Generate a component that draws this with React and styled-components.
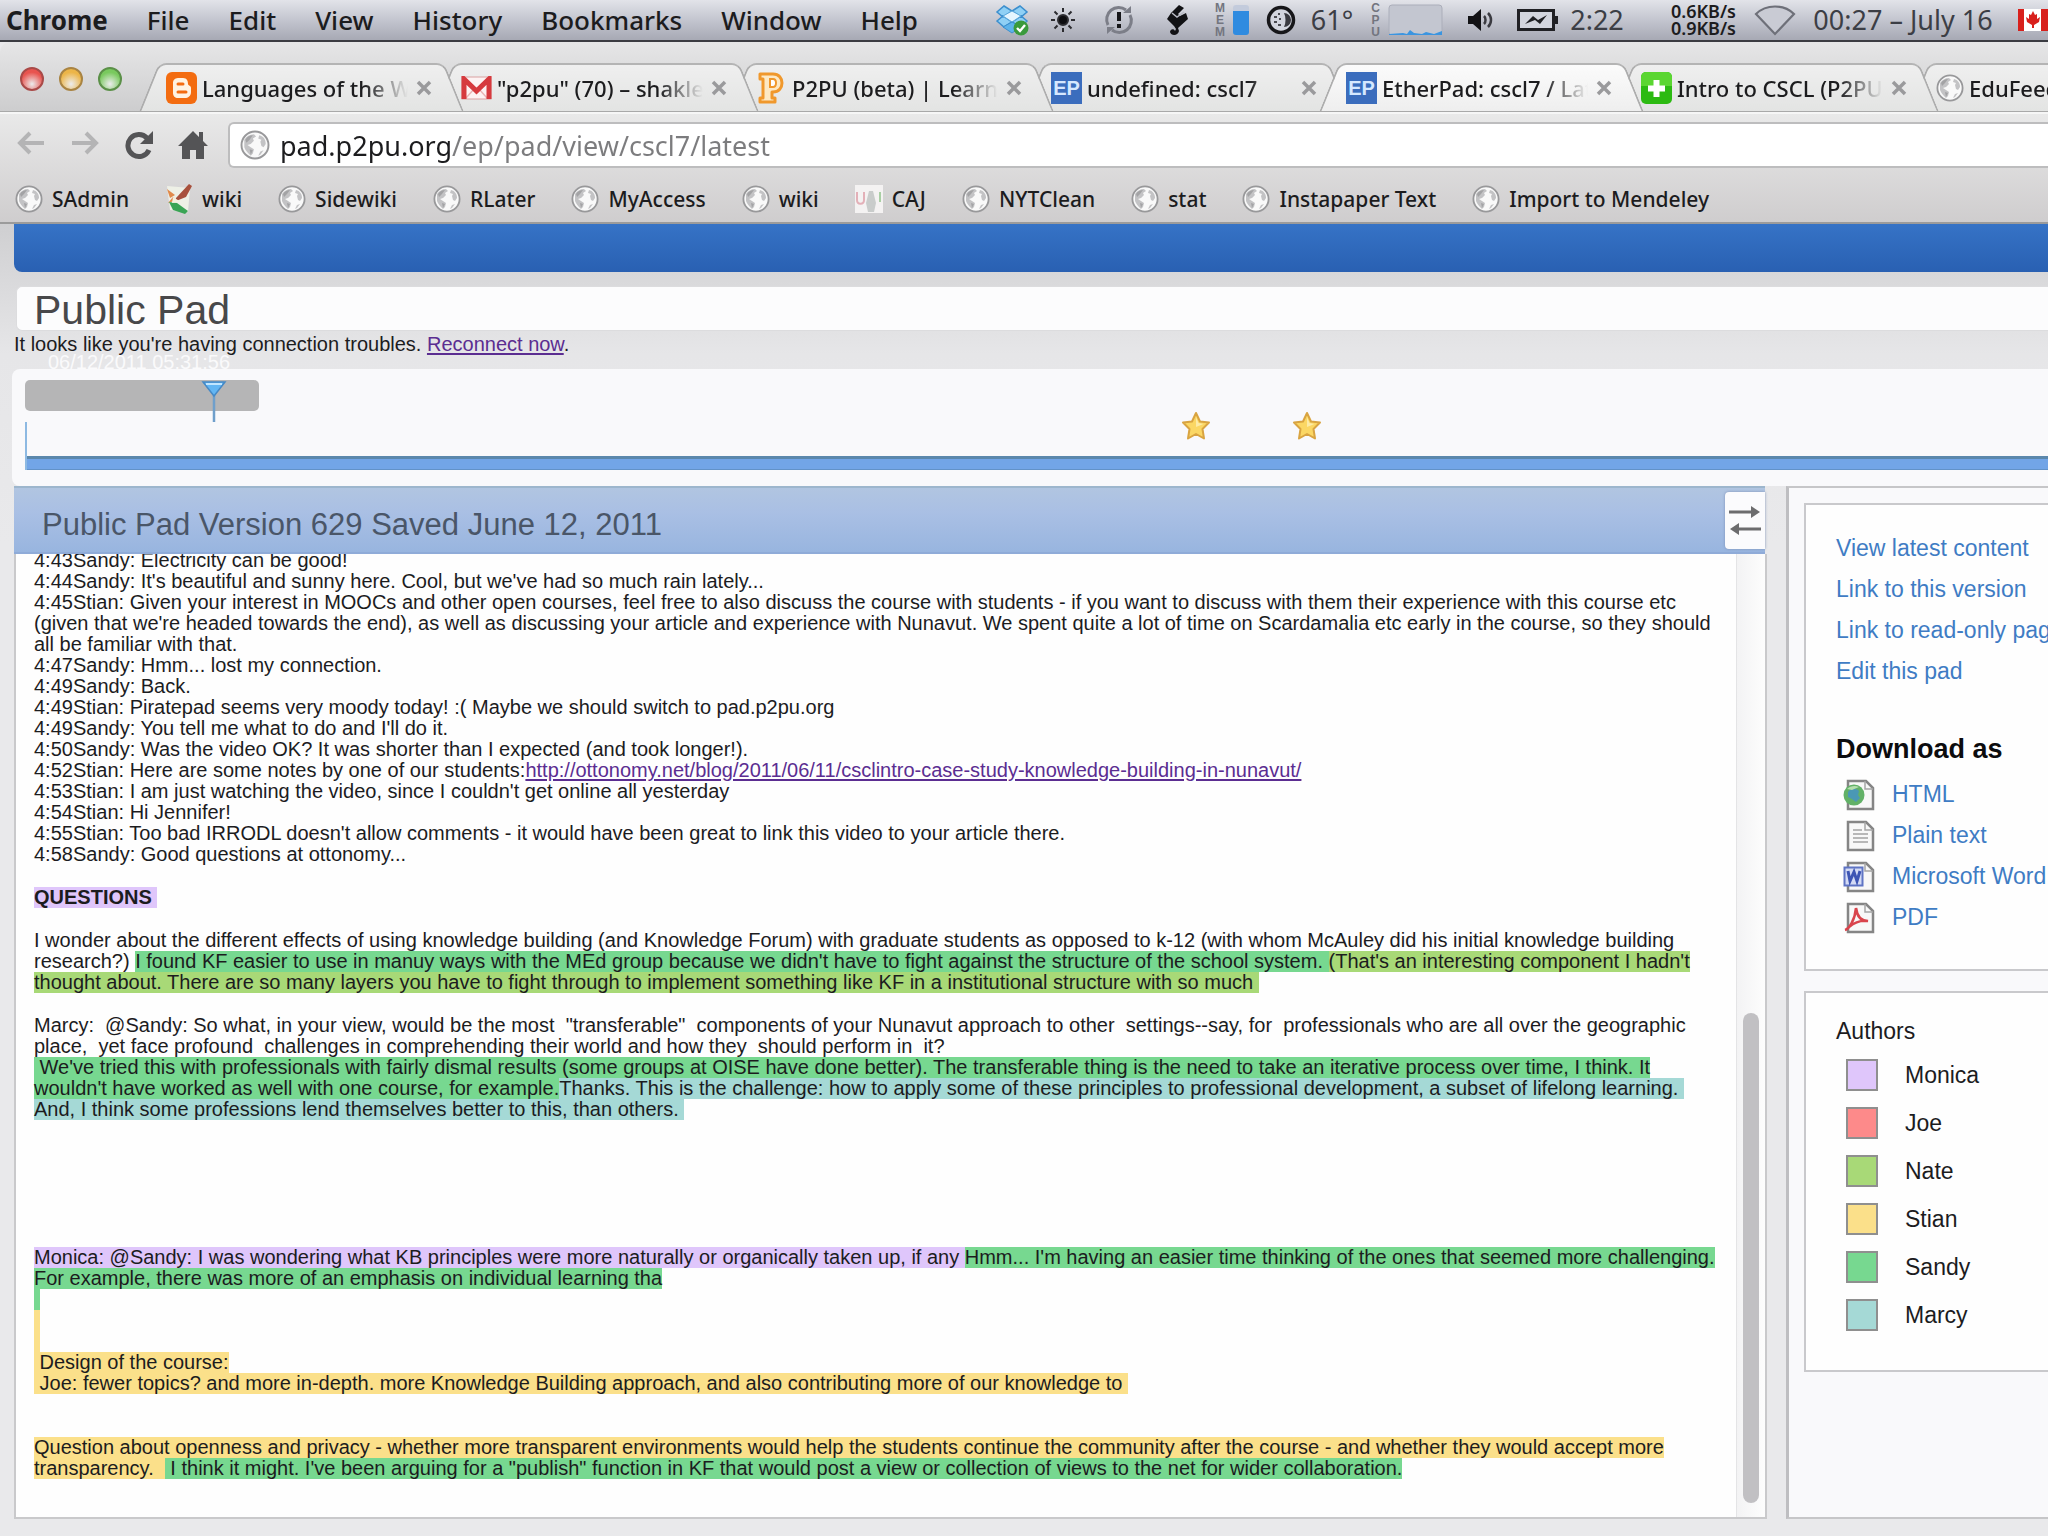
import React from "react";
import styled, { createGlobalStyle, css } from "styled-components";

const colors = {
  ink: "#1c1c1e",
  link: "#3f7cc4",
  visited: "#5b2d91",
  monica: "#dfc6fb",
  joe: "#fd8a8a",
  nate: "#a8d977",
  stian: "#fbe08a",
  sandy: "#77d890",
  marcy: "#a5d9d6",
};

const GlobalStyle = createGlobalStyle`
  *, *::before, *::after { box-sizing: border-box; }
  html, body { margin: 0; padding: 0; }
  body {
    background: #e9e9eb;
    color: ${colors.ink};
    font-family: "Liberation Sans", Arial, sans-serif;
    overflow-x: hidden;
  }
  p, h1, h2, h3, ul { margin: 0; padding: 0; }
  ul { list-style: none; }
  svg { display: block; flex: none; }
`;

const systemFont = css`
  font-family: "Noto Sans", "Open Sans", sans-serif;
`;

const plainButton = css`
  border: 0;
  padding: 0;
  background: none;
  color: inherit;
  font: inherit;
  cursor: pointer;
`;

const Screen = styled.div`
  display: flex;
  flex-direction: column;
  min-height: 100vh;
`;

/* ---------- system menu bar ---------- */

const MenuBar = styled.header`
  ${systemFont}
  display: flex;
  align-items: center;
  height: 42px;
  padding-left: 6px;
  overflow: hidden;
  border-bottom: 2px solid #3b3c42;
  background: linear-gradient(#e2e3e9, #c3c5cf 50%, #a7a9b4);
  font-size: 26px;
  line-height: 40px;
`;

const MenuNav = styled.nav`
  display: flex;
  gap: 39px;
  margin-right: auto;
`;

const MenuItem = styled.button`
  ${plainButton}
  ${systemFont}
  font-weight: ${(p) => (p.$bold ? 700 : 500)};
`;

const StatusArea = styled.div`
  display: flex;
  flex: none;
  align-items: center;
  height: 40px;
  color: #3c3e45;
  font-size: 27px;
`;

const StatusItem = styled.div`
  display: flex;
  align-items: center;
  justify-content: ${(p) => p.$align || "center"};
  gap: 8px;
  width: ${(p) => p.$w}px;
  white-space: nowrap;
`;

const StackedLabel = styled.span`
  display: flex;
  flex-direction: column;
  align-items: center;
  color: #73757f;
  font-family: "Liberation Sans", Arial, sans-serif;
  font-size: 12px;
  font-weight: 700;
  line-height: 12px;
`;

const MemoryGauge = styled.span`
  width: 16px;
  height: 30px;
  border-radius: 3px;
  background: linear-gradient(#c3cbdc 20%, #2f8be0 20%);
`;

const NetworkRate = styled.span`
  padding-right: 12px;
  color: ${colors.ink};
  font-size: 18px;
  font-weight: 600;
  line-height: 17px;
`;

/* ---------- browser chrome ---------- */

const TabStrip = styled.div`
  ${systemFont}
  display: flex;
  align-items: flex-end;
  height: 70px;
  overflow: hidden;
  border-top-left-radius: 10px;
  border-bottom: 1px solid #a9a9a9;
  background: linear-gradient(#e6e6e7, #cdcdce);
`;

const WindowButtons = styled.div`
  display: flex;
  flex: none;
  gap: 15px;
  width: 138px;
  padding: 0 0 20px 20px;
`;

const WindowButton = styled.button`
  ${plainButton}
  width: 24px;
  height: 24px;
  border: 2px solid ${(p) => p.$edge};
  border-radius: 50%;
  background: radial-gradient(circle at 50% 75%, #fff8, ${(p) => p.$fill} 65%);
`;

const TabRow = styled.div`
  display: flex;
  flex: none;
`;

const Tab = styled.div`
  position: relative;
  z-index: ${(p) => p.$level};
  display: flex;
  flex: none;
  align-items: center;
  width: 327px;
  height: 48px;
  margin-right: -32px;
  padding: 1px 33px 0 28px;

  &::before,
  &::after {
    content: "";
    position: absolute;
    z-index: -1;
    top: 0;
    bottom: ${(p) => (p.$active ? "-1px" : "0")};
    border-top: 2px solid #b4b4b4;
    background: ${(p) =>
      p.$active
        ? "linear-gradient(#fbfbfb, #eeeeee)"
        : "linear-gradient(#efefef, #e3e4e3)"};
  }
  &::before {
    left: 11px;
    right: 50%;
    border-left: 2px solid #adadad;
    border-top-left-radius: 8px;
    transform: skewX(-22deg);
  }
  &::after {
    left: 40%;
    right: 11px;
    border-right: 2px solid #adadad;
    border-top-right-radius: 8px;
    transform: skewX(22deg);
  }
`;

const TabLabel = styled.button`
  ${plainButton}
  ${systemFont}
  flex: 1;
  min-width: 0;
  margin-left: 5px;
  overflow: hidden;
  text-align: left;
  white-space: nowrap;
  font-size: 22px;
  font-weight: 500;
  line-height: 32px;
  mask-image: linear-gradient(to right, #000 calc(100% - 44px), transparent);
`;

const TabClose = styled.button`
  ${plainButton}
  margin-left: 8px;
  color: #9a9a9c;
`;

const LetterBadge = styled.span`
  flex: none;
  width: 31px;
  height: 32px;
  background: #3b6dbd;
  color: #d5e8ff;
  text-align: center;
  font-family: "Liberation Sans", Arial, sans-serif;
  font-size: 20px;
  font-weight: 700;
  line-height: 32px;
`;

const Toolbar = styled.div`
  ${systemFont}
  display: flex;
  flex-direction: column;
  height: 112px;
  padding-top: 8px;
  border-top: 2px solid #f6f6f6;
  border-bottom: 2px solid #9b9b9b;
  background: linear-gradient(#e9e9e9, #cfcdce);
`;

const NavigationRow = styled.div`
  display: flex;
  align-items: center;
`;

const NavButtons = styled.div`
  display: flex;
  flex: none;
  width: 228px;
  padding-left: 4px;
`;

const NavButton = styled.button`
  ${plainButton}
  display: flex;
  justify-content: center;
  width: 54px;
  color: ${(p) => (p.$muted ? "#b4b4b5" : "#545456")};
`;

const AddressBar = styled.label`
  display: flex;
  flex: 1;
  align-items: center;
  gap: 10px;
  height: 46px;
  padding-left: 10px;
  border: 2px solid #bdbdbe;
  border-right: 0;
  border-radius: 6px 0 0 6px;
  background: #fff;
`;

const AddressInput = styled.input`
  ${systemFont}
  flex: 1;
  height: 40px;
  padding: 0;
  border: 0;
  outline: 0;
  background: linear-gradient(to right, #1c1c1e 171px, #7c7c7e 171px);
  background-clip: text;
  color: transparent;
  font-size: 27px;
`;

const BookmarkRow = styled.nav`
  display: flex;
  flex: 1;
  align-items: center;
  gap: 36px;
  padding: 7px 0 0 15px;
`;

const Bookmark = styled.a`
  display: flex;
  align-items: center;
  gap: 9px;
  color: ${colors.ink};
  font-size: 21px;
  font-weight: 500;
  line-height: 30px;
  text-decoration: none;
  white-space: nowrap;
`;

/* ---------- pad page ---------- */

const PadPage = styled.main`
  display: flex;
  flex: 1;
  flex-direction: column;
  padding: 0 0 17px 14px;
  background: linear-gradient(#cfcfd1, #e6e6e8 130px, #e9e9eb 320px);
`;

const Banner = styled.div`
  height: 48px;
  margin-bottom: 14px;
  border-bottom-left-radius: 8px;
  background: linear-gradient(#3673c6, #2960b2);
`;

const PadTitle = styled.h1`
  height: 45px;
  margin-left: 2px;
  padding-left: 17px;
  border: 1px solid #dcdcde;
  border-right: 0;
  border-radius: 6px 0 0 6px;
  background: #fcfcfd;
  color: #48484a;
  font-size: 41px;
  font-weight: 400;
  line-height: 47px;
`;

const ConnectionNote = styled.p`
  height: 38px;
  font-size: 20px;
  line-height: 26px;
`;

const VisitedLink = styled.a`
  color: ${colors.visited};
  text-underline-offset: 2px;
`;

const Timeline = styled.section`
  position: relative;
  height: 117px;
  margin-left: -2px;
  padding: 11px 0 0 13px;
  border-radius: 8px 0 0 8px;
  background: #f9f9fb;
`;

const TimelineClock = styled.span`
  position: absolute;
  top: -18px;
  left: 36px;
  color: #fafafb;
  font-size: 20px;
  line-height: 22px;
`;

const Scrubber = styled.div`
  position: relative;
  width: 234px;
  height: 42px;
`;

const ScrubberRange = styled.input`
  appearance: none;
  display: block;
  width: 100%;
  height: 31px;
  margin: 0;
  border-radius: 5px;
  background: #b5b5b6;

  &::-webkit-slider-thumb {
    appearance: none;
    width: 26px;
    height: 31px;
  }
`;

const ScrubberHandle = styled.svg`
  position: absolute;
  top: 1px;
  left: 176px;
  pointer-events: none;
`;

const Axis = styled.div`
  position: relative;
  display: flex;
  align-items: flex-end;
  height: 48px;
  border-left: 2px solid #8db9e2;
`;

const AxisBar = styled.div`
  flex: 1;
  height: 14px;
  border-top: 3px solid #5b88ac;
  border-bottom: 1px solid #6292c8;
  background: #72a5e7;
`;

const StarPin = styled.svg`
  position: absolute;
  top: -11px;
  left: ${(p) => p.$x}px;
`;

const Columns = styled.div`
  display: flex;
  flex: 1;
  gap: 19px;
`;

const Document = styled.section`
  display: flex;
  flex: 1;
  flex-direction: column;
  min-width: 0;
`;

const VersionBar = styled.header`
  display: flex;
  align-items: center;
  justify-content: space-between;
  height: 68px;
  margin-right: 2px;
  border-top: 2px solid #9db6cd;
  border-bottom: 2px solid #8fabd8;
  background: linear-gradient(#b1c5e1, #a9bfe4 40%, #98b5df);
`;

const VersionTitle = styled.h2`
  padding: 9px 0 0 28px;
  color: #4a5668;
  font-size: 31px;
  font-weight: 400;
  line-height: 40px;
`;

const SwapButton = styled.button`
  ${plainButton}
  display: flex;
  align-items: center;
  justify-content: center;
  width: 40px;
  height: 57px;
  border-radius: 4px 0 0 4px;
  background: #fbfbfd;
  box-shadow: 0 0 3px #7b8fb5;
  color: #6c6c6e;
`;

const Viewport = styled.div`
  display: flex;
  flex: 1;
  overflow: hidden;
  border: 2px solid #c9c9cb;
  border-top: 0;
  background: #fefefe;
`;

const PadText = styled.article`
  flex: 1;
  min-width: 0;
  margin-top: -4px;
  padding: 0 0 16px 18px;
  font-size: 20px;
  line-height: 21px;
  white-space: pre;
`;

const Passage = styled.div`
  margin-bottom: ${(p) => p.$after || 0}px;
`;

const Line = styled.p`
  height: 21px;
`;

const Mark = styled.span`
  display: inline-block;
  height: 21px;
  background: ${(p) => colors[p.$by]};
  font-weight: ${(p) => (p.$bold ? 700 : 400)};
  vertical-align: top;
`;

const ScrollTrack = styled.div`
  display: flex;
  align-items: flex-end;
  flex: none;
  width: 29px;
  padding: 0 0 14px 6px;
  border-left: 1px solid #e4e4e6;
  background: linear-gradient(to right, #f3f3f4, #fdfdfd);
`;

const ScrollThumb = styled.div`
  width: 16px;
  height: 490px;
  border-radius: 8px;
  background: #c1c0c3;
`;

const Sidebar = styled.aside`
  flex: none;
  width: 262px;
  padding: 15px 0 0 15px;
  overflow: hidden;
  border: 2px solid #c6c6c8;
  border-right: 0;
  border-left: 3px solid #bebec1;
  background: #f9f9fb;
`;

const Card = styled.section`
  margin-bottom: 20px;
  padding: ${(p) => p.$pad};
  border: 2px solid #c9c9cc;
  border-right: 0;
  background: #fefefe;
  font-size: 23px;
  white-space: nowrap;
`;

const CardLink = styled.a`
  display: block;
  color: ${colors.link};
  line-height: 41px;
  text-decoration: none;
`;

const DownloadHeading = styled.h3`
  margin: 35px 0 3px;
  color: #0c0c0e;
  font-size: 27px;
  line-height: 44px;
`;

const DownloadRow = styled.li`
  display: flex;
  align-items: center;
  gap: 17px;
  height: 41px;
  padding-left: 7px;
`;

const AuthorsHeading = styled.h3`
  margin-bottom: 2px;
  font-size: 23px;
  font-weight: 400;
  line-height: 36px;
`;

const AuthorRow = styled.li`
  display: flex;
  align-items: center;
  gap: 27px;
  height: 48px;
  padding-left: 10px;
`;

const Swatch = styled.span`
  width: 32px;
  height: 32px;
  border: 2px solid #8f8f8f;
  background: ${(p) => colors[p.$by]};
`;

/* ---------- drawings ---------- */

const Globe = ({ size = 28 }) => (
  <svg width={size} height={size} viewBox="0 0 28 28">
    <circle cx="14" cy="14" r="12.6" fill="#f9f9f9" stroke="#98989a" strokeWidth="1.8" />
    <path d="M4 9c2-3 5-5 9-5l2 2-3 2 1 2-3 3-3 1 3 2 3 2-1 4-2 2c-3-3-5-5-6-8z" fill="#c3c3c5" />
    <path d="M5 9c2-3 4-4 7-4l-3 4-3 3zM9 18l3 1-2 4z" fill="#a3a3a5" />
    <path d="M18 5c4 1 6 4 6 8l-2 3-2-1-1-4 1-2-3-1zM19 20l3-1-3 4-2 1z" fill="#c3c3c5" />
  </svg>
);

const DropboxIcon = () => (
  <svg width="34" height="32" viewBox="0 0 34 32">
    <path d="M9 2l8 5-9 6-6-5zM25 2l-8 5 9 6 6-5zM2 17l6-5 9 6-8 5zM32 17l-6-5-9 6 8 5z" fill="#8fd0f5" stroke="#3c8fce" strokeWidth="1.5" />
    <path d="M8 12l9-5 9 5-9 6z" fill="#e4f5ff" stroke="#5aa8dc" />
    <path d="M8 23l9-5 9 5-9 6z" fill="#5db3ea" stroke="#3c8fce" />
    <circle cx="26" cy="24" r="7.5" fill="#3a9a3c" />
    <path d="M22 24l3 3 5-6" fill="none" stroke="#fff" strokeWidth="2.4" />
  </svg>
);

const SunIcon = () => (
  <svg width="26" height="26" viewBox="0 0 26 26" stroke="#2c2c30" strokeWidth="2" fill="#0d0d10">
    <circle cx="13" cy="13" r="5" />
    <path d="M13 1v4M13 21v4M1 13h4M21 13h4M4.500 4.500l3 3M18.500 18.500l3 3M4.500 21.500l3-3M18.500 7.500l3-3" />
  </svg>
);

const SyncAlertIcon = () => (
  <svg width="30" height="30" viewBox="0 0 30 30" fill="none">
    <path d="M4 20A12 12 0 0 1 22 5M26 10A12 12 0 0 1 8 25" stroke="#7c7e88" strokeWidth="3" />
    <path d="M19 8h8V1zM11 22H3v7z" fill="#7c7e88" />
    <path d="M15 7v9M15 19v4" stroke="#17171a" strokeWidth="4" />
  </svg>
);

const QuillIcon = () => (
  <svg width="24" height="32" viewBox="0 0 24 32">
    <path d="M14 1l5 3-6 6 2 2 6-3 2 6-10 9 1 3c-1 5-8 5-9 1 0-3 4-4 5-1l1-2-2-3-7-7 4-6z" fill="#121215" />
    <path d="M7 9l5 4 7-5" fill="none" stroke="#b9bbc5" strokeWidth="1.500" />
  </svg>
);

const DialIcon = () => (
  <svg width="30" height="30" viewBox="0 0 30 30">
    <circle cx="15" cy="15" r="12.500" fill="#d3d5de" stroke="#17171a" strokeWidth="3.500" />
    <path d="M18 8a7 7 0 0 1 0 14c2-4 2-10 0-14z" fill="#3a3a40" />
    <path d="M8 12h3M8 17h3M12 9h2M12 20h3M13 14h2" stroke="#4a4a50" strokeWidth="2" />
  </svg>
);

const CpuGraph = () => (
  <svg width="55" height="32" viewBox="0 0 55 32">
    <rect x="1" y="1" width="53" height="30" rx="3" fill="#c3c6d0" stroke="#abaeba" />
    <path d="M1 31v-1l14-1 4 1 3-4 4 3 8 1 4-2 8 2 8-3v4z" fill="#3b95e0" />
  </svg>
);

const SpeakerIcon = () => (
  <svg width="30" height="26" viewBox="0 0 30 26">
    <path d="M2 9h5l8-7v22l-8-7H2z" fill="#121215" />
    <path d="M18 9c2 2 2 6 0 8M22 6c4 4 4 10 0 14" fill="none" stroke="#3a3a40" strokeWidth="2.500" />
  </svg>
);

const BatteryIcon = () => (
  <svg width="42" height="24" viewBox="0 0 42 24">
    <rect x="1.500" y="2.500" width="35" height="19" fill="#d3d5de" stroke="#202024" strokeWidth="3" />
    <path d="M38 8h3v8h-3z" fill="#202024" />
    <path d="M8 16l8-8 5 4 9-5-7 9-5-4z" fill="#202024" />
  </svg>
);

const WifiIcon = () => (
  <svg width="42" height="32" viewBox="0 0 42 32">
    <path d="M2 10C12 0 30 0 40 10L21 30z" fill="#c9cbd4" stroke="#6e7079" strokeWidth="2.200" />
  </svg>
);

const CanadaFlag = () => (
  <svg width="30" height="22" viewBox="0 0 30 22">
    <path d="M0 0h30v22H0z" fill="#fff" />
    <path d="M0 0h6v22H0zM23 0h7v22h-7z" fill="#d8201c" />
    <path d="M15 2l2 4 2-1v5l3-2-1 5-5 3v3h-2v-3l-5-3-1-5 3 2V5l2 1z" fill="#d8201c" />
  </svg>
);

const BloggerIcon = () => (
  <svg width="31" height="32" viewBox="0 0 31 32">
    <rect width="31" height="32" rx="6" fill="#f36c10" />
    <path d="M7 11c0-4 3-5 6-5h4c4 0 5 3 5 6 0 2 3 1 3 4v4c0 4-3 6-6 6h-7c-3 0-5-2-5-5z" fill="#fff3e2" />
    <path d="M12 12h5M12 20h8" stroke="#f36c10" strokeWidth="3" strokeLinecap="round" />
  </svg>
);

const GmailIcon = () => (
  <svg width="31" height="24" viewBox="0 0 31 24">
    <rect x="1" y="1" width="29" height="22" fill="#fdf3f3" stroke="#d9a1a1" />
    <path d="M5 22l8-9M26 22l-8-9" stroke="#eab6b6" strokeWidth="1.500" />
    <path d="M3 23V3l12.500 12L28 3v20" fill="none" stroke="#d63a3e" strokeWidth="5" />
  </svg>
);

const P2puIcon = () => (
  <svg width="31" height="32" viewBox="0 0 31 32">
    <path d="M4 2h13c12 0 12 18 0 18h-1v6h3v4H4v-4h3V7H4z" fill="#fde9c4" stroke="#f0982c" strokeWidth="3" strokeLinejoin="round" />
    <path d="M14 7h3c4 0 4 8 0 8h-3z" fill="#fff" stroke="#f0982c" strokeWidth="2" />
  </svg>
);

const PlusIcon = () => (
  <svg width="31" height="32" viewBox="0 0 31 32">
    <rect width="31" height="32" rx="5" fill="#2cba12" />
    <path d="M5 0h21a5 5 0 0 1 5 5v9H0V5a5 5 0 0 1 5-5z" fill="#5ad631" />
    <path d="M15.500 8v17M7 16.500h17" stroke="#fff" strokeWidth="6" />
  </svg>
);

const CloseGlyph = () => (
  <svg width="16" height="16" viewBox="0 0 16 16">
    <path d="M2 2l12 12M14 2L2 14" stroke="currentColor" strokeWidth="3.500" />
  </svg>
);

const ArrowGlyph = ({ flip }) => (
  <svg width="30" height="26" viewBox="0 0 30 26">
    <path
      d={flip ? "M2 13h24M16 3l10 10-10 10" : "M28 13H4M14 3L4 13l10 10"}
      fill="none"
      stroke="currentColor"
      strokeWidth="4"
    />
  </svg>
);

const ReloadGlyph = () => (
  <svg width="30" height="30" viewBox="0 0 30 30">
    <path d="M23 8a11 11 0 1 0 2 12" fill="none" stroke="currentColor" strokeWidth="5" />
    <path d="M29 1v13H16z" fill="currentColor" />
  </svg>
);

const HomeGlyph = () => (
  <svg width="30" height="30" viewBox="0 0 30 30">
    <path d="M15 1l6 6V2h4v9l5 5h-4v13h-8v-9h-6v9H4V16H0z" fill="currentColor" />
  </svg>
);

const WikiIcon = () => (
  <svg width="28" height="32" viewBox="0 0 28 32">
    <path d="M2 3l23 2-2 24-18-2z" fill="#eef0e6" />
    <path d="M2 6l8 6-5 3zM3 20l5-6 4 3z" fill="#e08a4c" />
    <path d="M11 15L24 1l3 2-6 11-10 4z" fill="#a8503c" />
    <path d="M4 19l8 1 11 8-3 3-12-4z" fill="#3aa455" />
    <path d="M8 14l8 5-9 1z" fill="#f6f0df" />
  </svg>
);

const CajIcon = () => (
  <svg width="28" height="28" viewBox="0 0 28 28">
    <path d="M0 0h28v28H0z" fill="#f4f2f2" />
    <path d="M2 7v8c0 5 7 5 7 0V7" fill="none" stroke="#e3b0b8" strokeWidth="2" />
    <path d="M11 18l3-12h4l3 12-2 9h-6z" fill="#c9cccb" />
    <path d="M25 7v10" stroke="#a9cfa4" strokeWidth="2" />
  </svg>
);

const Star = ({ x }) => (
  <StarPin $x={x} width="30" height="30" viewBox="0 0 30 30">
    <path
      d="M15 2l4 8.500 9 1-6.500 6.500 1.500 9.500-8-4.500-8 4.500 1.500-9.500L2 11.500l9-1z"
      fill="#fbd764"
      stroke="#d9a441"
      strokeWidth="2"
      strokeLinejoin="round"
    />
    <path d="M15 6l2.500 6 5 1-7.500 3z" fill="#fdeba6" />
  </StarPin>
);

const SwapGlyph = () => (
  <svg width="32" height="36" viewBox="0 0 32 36" fill="none" stroke="currentColor" strokeWidth="3">
    <path d="M0 10h26M6 27h26" />
    <path d="M31 10l-9-6v12zM1 27l9-6v12z" fill="currentColor" stroke="none" />
  </svg>
);

const FileIcon = ({ kind }) => (
  <svg width="32" height="32" viewBox="0 0 32 32">
    <path d="M5 2h18l7 7v21H5z" fill="#f8f8f8" stroke="#858585" strokeWidth="2.500" />
    <path d="M22 2v8h8" fill="none" stroke="#a5a5a5" strokeWidth="1.500" />
    {kind === "html" && (
      <>
        <circle cx="11" cy="16" r="10.500" fill="#62b167" />
        <path d="M5 13c3-4 8-4 11-1l-1 4 2 3-4 4-4-3-4-2z" fill="#4a98b5" />
        <path d="M4 10c3-3 8-4 12-2l-7 3z" fill="#b4dfae" />
      </>
    )}
    {kind === "text" && <path d="M10 10h9M10 14h15M10 18h15M10 22h15" stroke="#b8b8b8" strokeWidth="1.800" />}
    {kind === "word" && (
      <>
        <rect x="1.500" y="6.500" width="18" height="18" fill="#d4dbf5" stroke="#5f74c4" strokeWidth="2" />
        <path d="M5 10l2 10 4-9 3 9 3-10" fill="none" stroke="#3d55b4" strokeWidth="3" />
      </>
    )}
    {kind === "pdf" && (
      <path d="M2 28c4-1 10-10 11-22 1 8 5 13 12 13-7-1-13 1-19 6" fill="none" stroke="#d9444c" strokeWidth="2.600" />
    )}
  </svg>
);

/* ---------- data ---------- */

const menus = ["File", "Edit", "View", "History", "Bookmarks", "Window", "Help"];

const tabs = [
  { title: "Languages of the Wo", icon: <BloggerIcon /> },
  { title: '"p2pu" (70) – shakle', icon: <GmailIcon /> },
  { title: "P2PU (beta) | Learnin", icon: <P2puIcon /> },
  { title: "undefined: cscl7", icon: <LetterBadge>EP</LetterBadge> },
  { title: "EtherPad: cscl7 / Lat", icon: <LetterBadge>EP</LetterBadge>, active: true },
  { title: "Intro to CSCL (P2PU", icon: <PlusIcon /> },
  { title: "EduFeedr", icon: <Globe /> },
];

const bookmarks = [
  { name: "SAdmin" },
  { name: "wiki", icon: <WikiIcon /> },
  { name: "Sidewiki" },
  { name: "RLater" },
  { name: "MyAccess" },
  { name: "wiki" },
  { name: "CAJ", icon: <CajIcon /> },
  { name: "NYTClean" },
  { name: "stat" },
  { name: "Instapaper Text" },
  { name: "Import to Mendeley" },
];

const padLinks = ["View latest content", "Link to this version", "Link to read-only page", "Edit this pad"];

const downloads = [
  { kind: "html", name: "HTML" },
  { kind: "text", name: "Plain text" },
  { kind: "word", name: "Microsoft Word" },
  { kind: "pdf", name: "PDF" },
];

const authors = ["Monica", "Joe", "Nate", "Stian", "Sandy", "Marcy"];

const storyUrl = "http://ottonomy.net/blog/2011/06/11/csclintro-case-study-knowledge-building-in-nunavut/";

/* Each passage lists its lines; a line is a list of runs: plain text or { by, text }. */
const passages = [
  {
    after: 22,
    lines: [
      ["4:43Sandy: Electricity can be good!"],
      ["4:44Sandy: It's beautiful and sunny here. Cool, but we've had so much rain lately..."],
      ["4:45Stian: Given your interest in MOOCs and other open courses, feel free to also discuss the course with students - if you want to discuss with them their experience with this course etc"],
      ["(given that we're headed towards the end), as well as discussing your article and experience with Nunavut. We spent quite a lot of time on Scardamalia etc early in the course, so they should"],
      ["all be familiar with that."],
      ["4:47Sandy: Hmm... lost my connection."],
      ["4:49Sandy: Back."],
      ["4:49Stian: Piratepad seems very moody today! :( Maybe we should switch to pad.p2pu.org"],
      ["4:49Sandy: You tell me what to do and I'll do it."],
      ["4:50Sandy: Was the video OK? It was shorter than I expected (and took longer!)."],
      ["4:52Stian: Here are some notes by one of our students:", { href: storyUrl }],
      ["4:53Stian: I am just watching the video, since I couldn't get online all yesterday"],
      ["4:54Stian: Hi Jennifer!"],
      ["4:55Stian: Too bad IRRODL doesn't allow comments - it would have been great to link this video to your article there."],
      ["4:58Sandy: Good questions at ottonomy..."],
    ],
  },
  { after: 22, lines: [[{ by: "monica", bold: true, text: "QUESTIONS " }]] },
  {
    after: 22,
    lines: [
      ["I wonder about the different effects of using knowledge building (and Knowledge Forum) with graduate students as opposed to k-12 (with whom McAuley did his initial knowledge building"],
      [
        "research?) ",
        { by: "sandy", text: "I found KF easier to use in manuy ways with the MEd group because we didn't have to fight against the structure of the school system. " },
        { by: "nate", text: "(That's an interesting component I hadn't" },
      ],
      [{ by: "nate", text: "thought about. There are so many layers you have to fight through to implement something like KF in a institutional structure with so much " }],
    ],
  },
  {
    after: 127,
    lines: [
      ['Marcy:  @Sandy: So what, in your view, would be the most  "transferable"  components of your Nunavut approach to other  settings--say, for  professionals who are all over the geographic'],
      ["place,  yet face profound  challenges in comprehending their world and how they  should perform in  it?"],
      [{ by: "sandy", text: " We've tried this with professionals with fairly dismal results (some groups at OISE have done better). The transferable thing is the need to take an iterative process over time, I think. It" }],
      [
        { by: "sandy", text: "wouldn't have worked as well with one course, for example." },
        { by: "marcy", text: "Thanks. This is the challenge: how to apply some of these principles to professional development, a subset of lifelong learning. " },
      ],
      [{ by: "marcy", text: "And, I think some professions lend themselves better to this, than others. " }],
    ],
  },
  {
    after: 43,
    lines: [
      [
        { by: "monica", text: "Monica: @Sandy: I was wondering what KB principles were more naturally or organically taken up, if any " },
        { by: "sandy", text: "Hmm... I'm having an easier time thinking of the ones that seemed more challenging." },
      ],
      [{ by: "sandy", text: "For example, there was more of an emphasis on individual learning tha" }],
      [{ by: "sandy", text: " " }],
      [{ by: "stian", text: " " }],
      [{ by: "stian", text: " " }],
      [{ by: "stian", text: " Design of the course:" }],
      [{ by: "stian", text: " Joe: fewer topics? and more in-depth. more Knowledge Building approach, and also contributing more of our knowledge to " }],
    ],
  },
  {
    lines: [
      [{ by: "stian", text: "Question about openness and privacy - whether more transparent environments would help the students continue the community after the course - and whether they would accept more" }],
      [
        { by: "stian", text: "transparency.  " },
        { by: "sandy", text: " I think it might. I've been arguing for a \"publish\" function in KF that would post a view or collection of views to the net for wider collaboration." },
      ],
    ],
  },
];

const Run = ({ run }) => {
  if (typeof run === "string") return run;
  if (run.href) return <VisitedLink href={run.href}>{run.href}</VisitedLink>;
  return (
    <Mark $by={run.by} $bold={run.bold}>
      {run.text}
    </Mark>
  );
};

/* ---------- sections ---------- */

const SystemMenu = () => (
  <MenuBar>
    <MenuNav>
      <MenuItem $bold>Chrome</MenuItem>
      {menus.map((name) => (
        <MenuItem key={name}>{name}</MenuItem>
      ))}
    </MenuNav>
    <StatusArea>
      <StatusItem $w={48}><DropboxIcon /></StatusItem>
      <StatusItem $w={54}><SunIcon /></StatusItem>
      <StatusItem $w={58}><SyncAlertIcon /></StatusItem>
      <StatusItem $w={58}><QuillIcon /></StatusItem>
      <StatusItem $w={52}>
        <StackedLabel><span>M</span><span>E</span><span>M</span></StackedLabel>
        <MemoryGauge />
      </StatusItem>
      <StatusItem $w={46}><DialIcon /></StatusItem>
      <StatusItem $w={56}>61°</StatusItem>
      <StatusItem $w={94}>
        <StackedLabel><span>C</span><span>P</span><span>U</span></StackedLabel>
        <CpuGraph />
      </StatusItem>
      <StatusItem $w={54}><SpeakerIcon /></StatusItem>
      <StatusItem $w={60}><BatteryIcon /></StatusItem>
      <StatusItem $w={58}>2:22</StatusItem>
      <StatusItem $w={122} $align="flex-end">
        <NetworkRate>0.6KB/s<br />0.9KB/s</NetworkRate>
      </StatusItem>
      <StatusItem $w={54}><WifiIcon /></StatusItem>
      <StatusItem $w={202}>00:27 – July 16</StatusItem>
      <StatusItem $w={44} $align="flex-end"><CanadaFlag /></StatusItem>
    </StatusArea>
  </MenuBar>
);

const BrowserTabs = () => (
  <TabStrip>
    <WindowButtons>
      <WindowButton aria-label="Close window" $fill="#e8544f" $edge="#a94a48" />
      <WindowButton aria-label="Minimize window" $fill="#ecb548" $edge="#a98443" />
      <WindowButton aria-label="Zoom window" $fill="#79c95e" $edge="#5b9048" />
    </WindowButtons>
    <TabRow>
      {tabs.map((tab, i) => (
        <Tab key={tab.title} $active={tab.active} $level={tab.active ? 20 : 10 - i}>
          {tab.icon}
          <TabLabel>{tab.title}</TabLabel>
          <TabClose aria-label="Close tab"><CloseGlyph /></TabClose>
        </Tab>
      ))}
    </TabRow>
  </TabStrip>
);

const BrowserToolbar = () => (
  <Toolbar>
    <NavigationRow>
      <NavButtons>
        <NavButton aria-label="Back" $muted><ArrowGlyph /></NavButton>
        <NavButton aria-label="Forward" $muted><ArrowGlyph flip /></NavButton>
        <NavButton aria-label="Reload"><ReloadGlyph /></NavButton>
        <NavButton aria-label="Home"><HomeGlyph /></NavButton>
      </NavButtons>
      <AddressBar>
        <Globe size={30} />
        <AddressInput aria-label="Address" defaultValue="pad.p2pu.org/ep/pad/view/cscl7/latest" />
      </AddressBar>
    </NavigationRow>
    <BookmarkRow>
      {bookmarks.map((b, i) => (
        <Bookmark key={i} href="#">
          {b.icon || <Globe />}
          {b.name}
        </Bookmark>
      ))}
    </BookmarkRow>
  </Toolbar>
);

const RevisionTimeline = () => (
  <Timeline>
    <TimelineClock>06/12/2011 05:31:56</TimelineClock>
    <Scrubber>
      <ScrubberRange type="range" min="0" max="100" defaultValue="81" aria-label="Revision" />
      <ScrubberHandle width="26" height="42" viewBox="0 0 26 42">
        <path d="M13 12v29" stroke="#6f9fcb" strokeWidth="2.500" />
        <path d="M2 1h22L13 15z" fill="#63b6f3" stroke="#4689c6" strokeWidth="1.500" />
        <path d="M5 3h16" stroke="#c2e6ff" strokeWidth="2" />
      </ScrubberHandle>
    </Scrubber>
    <Axis>
      <AxisBar />
      <Star x={1154} />
      <Star x={1265} />
    </Axis>
  </Timeline>
);

const PadDocument = () => (
  <Document>
    <VersionBar>
      <VersionTitle>Public Pad Version 629 Saved June 12, 2011</VersionTitle>
      <SwapButton aria-label="Swap columns"><SwapGlyph /></SwapButton>
    </VersionBar>
    <Viewport>
      <PadText>
        {passages.map((passage, i) => (
          <Passage key={i} $after={passage.after}>
            {passage.lines.map((line, j) => (
              <Line key={j}>
                {line.map((run, k) => (
                  <Run key={k} run={run} />
                ))}
              </Line>
            ))}
          </Passage>
        ))}
      </PadText>
      <ScrollTrack>
        <ScrollThumb />
      </ScrollTrack>
    </Viewport>
  </Document>
);

const PadSidebar = () => (
  <Sidebar>
    <Card $pad="23px 0 31px 30px">
      {padLinks.map((name) => (
        <CardLink key={name} href="#">{name}</CardLink>
      ))}
      <DownloadHeading>Download as</DownloadHeading>
      <ul>
        {downloads.map((d) => (
          <DownloadRow key={d.kind}>
            <FileIcon kind={d.kind} />
            <CardLink href="#">{d.name}</CardLink>
          </DownloadRow>
        ))}
      </ul>
    </Card>
    <Card $pad="20px 0 31px 30px">
      <AuthorsHeading>Authors</AuthorsHeading>
      <ul>
        {authors.map((name) => (
          <AuthorRow key={name}>
            <Swatch $by={name.toLowerCase()} />
            {name}
          </AuthorRow>
        ))}
      </ul>
    </Card>
  </Sidebar>
);

export default function App() {
  return (
    <Screen>
      <GlobalStyle />
      <SystemMenu />
      <BrowserTabs />
      <BrowserToolbar />
      <PadPage>
        <Banner />
        <PadTitle>Public Pad</PadTitle>
        <ConnectionNote>
          It looks like you're having connection troubles. <VisitedLink href="#">Reconnect now</VisitedLink>.
        </ConnectionNote>
        <RevisionTimeline />
        <Columns>
          <PadDocument />
          <PadSidebar />
        </Columns>
      </PadPage>
    </Screen>
  );
}
